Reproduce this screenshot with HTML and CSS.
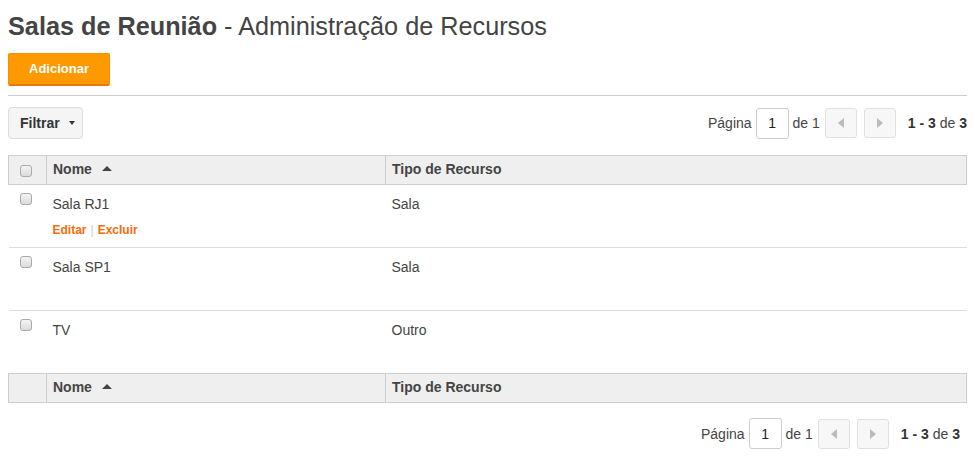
FILE: index.html
```html
<!DOCTYPE html>
<html lang="pt">
<head>
<meta charset="utf-8">
<link rel="stylesheet" href="styles.css">
</head>
<body>
<div class="page">
  <h1 class="title"><strong>Salas de Reunião</strong> - Administração de Recursos</h1>
  <div class="actions"><button class="btn-primary">Adicionar</button></div>
  <div class="toolbar">
    <button class="btn-filter">Filtrar <span class="caret"></span></button>
    <div class="pager">
      <span class="lbl">Página</span>
      <span class="page-input">1</span>
      <span class="lbl">de 1</span>
      <span class="pbtn"><svg width="6" height="10" viewBox="0 0 6 10"><path d="M6 0L0 5L6 10Z" fill="#bbb"/></svg></span>
      <span class="pbtn"><svg width="6" height="10" viewBox="0 0 6 10"><path d="M0 0L6 5L0 10Z" fill="#bbb"/></svg></span>
      <span class="count"><b>1 - 3</b> de <b>3</b></span>
    </div>
  </div>
  <table class="grid">
    <thead>
      <tr>
        <th class="c-check"><span class="cb"></span></th>
        <th class="c-name">Nome <span class="sort"></span></th>
        <th class="c-type">Tipo de Recurso</th>
      </tr>
    </thead>
    <tbody>
      <tr>
        <td class="c-check"><span class="cb"></span></td>
        <td class="c-name"><div>Sala RJ1</div><div class="row-actions"><a>Editar</a><span class="sep">|</span><a>Excluir</a></div></td>
        <td class="c-type">Sala</td>
      </tr>
      <tr>
        <td class="c-check"><span class="cb"></span></td>
        <td class="c-name"><div>Sala SP1</div></td>
        <td class="c-type">Sala</td>
      </tr>
      <tr class="last">
        <td class="c-check"><span class="cb"></span></td>
        <td class="c-name"><div>TV</div></td>
        <td class="c-type">Outro</td>
      </tr>
    </tbody>
    <tfoot>
      <tr>
        <th class="c-check"></th>
        <th class="c-name">Nome <span class="sort"></span></th>
        <th class="c-type">Tipo de Recurso</th>
      </tr>
    </tfoot>
  </table>
  <div class="bottom-pager">
    <div class="pager">
      <span class="lbl">Página</span>
      <span class="page-input">1</span>
      <span class="lbl">de 1</span>
      <span class="pbtn"><svg width="6" height="10" viewBox="0 0 6 10"><path d="M6 0L0 5L6 10Z" fill="#bbb"/></svg></span>
      <span class="pbtn"><svg width="6" height="10" viewBox="0 0 6 10"><path d="M0 0L6 5L0 10Z" fill="#bbb"/></svg></span>
      <span class="count"><b>1 - 3</b> de <b>3</b></span>
    </div>
  </div>
</div>
</body>
</html>
```

FILE: styles.css
```css
* { box-sizing: border-box; }
body {
  margin: 0;
  font-family: "Liberation Sans", Arial, sans-serif;
  color: #444;
  background: #fff;
}
.page { padding: 8px 8px 0 8px; }
.title {
  margin: 0;
  font-size: 25.25px;
  font-weight: normal;
  line-height: 36px;
  color: #444;
}
.title strong { font-weight: bold; }
.actions { margin-top: 9px; padding-bottom: 9px; border-bottom: 1px solid #ccc; }
.btn-primary {
  display: block;
  width: 102px;
  height: 33px;
  background: #ff9900;
  border: 1px solid #f39200;
  border-bottom: 2px solid #e87800;
  border-radius: 2px;
  color: #fff;
  font-family: "Liberation Sans", Arial, sans-serif;
  font-weight: bold;
  font-size: 13px;
  padding: 0 0 1px 0;
}
.toolbar {
  display: flex;
  justify-content: space-between;
  align-items: center;
  margin-top: 11px;
}
.btn-filter {
  height: 32px;
  width: 75px;
  background: #f5f5f5;
  border: 1px solid #dcdcdc;
  border-radius: 4px;
  font-family: "Liberation Sans", Arial, sans-serif;
  font-weight: bold;
  font-size: 14px;
  color: #333;
  text-align: left;
  padding: 0 0 0 11px;
}
.caret {
  display: inline-block;
  width: 0; height: 0;
  border-left: 3px solid transparent;
  border-right: 3px solid transparent;
  border-top: 4px solid #333;
  vertical-align: middle;
  margin-left: 5px;
  position: relative;
  top: -1px;
}
.pager {
  display: flex;
  align-items: center;
  font-size: 14px;
  color: #444;
}
.lbl { margin: 0 4px; }
.pager .lbl:first-child { margin-left: 0; }
.page-input {
  width: 33px;
  height: 31px;
  border: 1px solid #ccc;
  border-radius: 3px;
  display: flex;
  align-items: center;
  justify-content: center;
  color: #222;
}
.pbtn {
  width: 32px;
  height: 30px;
  border: 1px solid #e0e0e0;
  border-radius: 3px;
  background: #f7f7f7;
  display: flex;
  align-items: center;
  justify-content: center;
  margin-left: 1px;
}
.pbtn + .pbtn { margin-left: 7px; }
.count { margin-left: 12px; }
.count b { color: #333; }
.grid {
  width: 100%;
  margin-top: 16px;
  border-collapse: collapse;
  font-size: 14px;
}
.grid th {
  background: #efefef;
  border: 1px solid #ccc;
  text-align: left;
  font-weight: bold;
  height: 29px;
  padding: 5px 6px 0 6px;
  color: #444;
  vertical-align: top;
}
.grid .c-check { width: 38px; padding: 0 0 0 11px; text-align: left; }
.grid th.c-check { padding-top: 9px; }
.grid .c-name { width: 339px; }
.grid td {
  vertical-align: top;
  height: 63px;
  border-bottom: 1px solid #ddd;
  padding: 11px 6px 0 6px;
  color: #444;
}
.grid td.c-check { padding-top: 8px; }
.grid tr.last td { border-bottom: none; }
.cb {
  display: inline-block;
  width: 12px;
  height: 12px;
  border: 1px solid #aaa;
  border-radius: 3px;
  background: linear-gradient(#f4f4f4, #dcdcdc);
  vertical-align: top;
}
.sort {
  display: inline-block;
  width: 0; height: 0;
  border-left: 5px solid transparent;
  border-right: 5px solid transparent;
  border-bottom: 5px solid #444;
  margin-left: 6px;
  vertical-align: middle;
  position: relative;
  top: -2px;
}
.row-actions {
  margin-top: 11px;
  font-size: 12px;
  font-weight: bold;
}
.row-actions a { color: #f76b0a; }
.sep { color: #ccc; font-weight: normal; margin: 0 4px; }
.bottom-pager {
  display: flex;
  justify-content: flex-end;
  padding-right: 7px;
  margin-top: 15px;
}
```
